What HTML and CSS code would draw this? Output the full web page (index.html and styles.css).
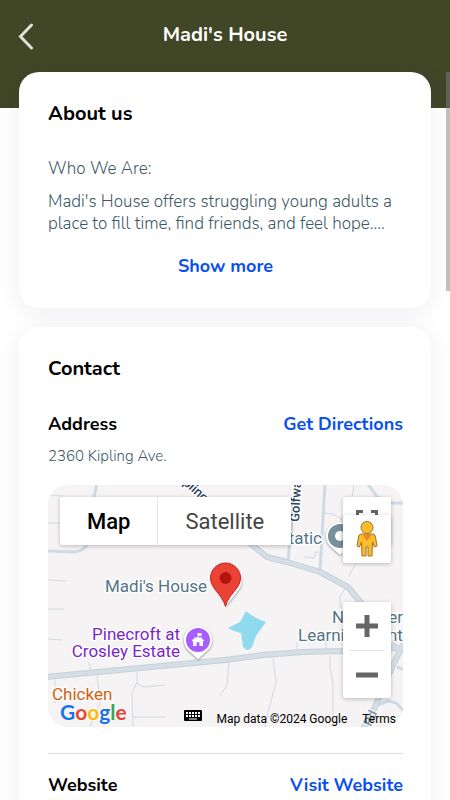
FILE: index.html
```html
<!DOCTYPE html>
<html lang="en">

<head>
    <meta charset="UTF-8">
    <meta name="viewport" content="width=device-width, initial-scale=1.0">
    <title>Madi's House</title>
    <link rel="stylesheet" href="styles.css">
</head>

<body>
    <header class="top-bar">
        <button class="back-btn" type="button" aria-label="Back">
            <svg width="16" height="28" viewBox="0 0 16 28">
                <path d="M13.500 3L2.500 14.500l11 11.500" />
            </svg>
        </button>
        <h1>Madi's House</h1>
    </header>

    <main>
        <section class="card">
            <h2>About us</h2>
            <div class="about-text">
                <p>Who We Are:</p>
                <p>Madi's House offers struggling young adults a place to fill time, find friends, and feel hope....</p>
            </div>
            <button class="show-more" type="button">Show more</button>
        </section>

        <section class="card contact">
            <h2>Contact</h2>
            <div class="row">
                <h3>Address</h3>
                <a href="#directions">Get Directions</a>
            </div>
            <p class="address">2360 Kipling Ave.</p>

            <div class="map">
                <svg class="map-canvas" viewBox="0 0 355 242" preserveAspectRatio="xMidYMid slice">
                    <!-- small streets -->
                    <g class="street">
                        <path d="M0 10L15 11M0 38H12M0 95L18 96M0 124H16M0 154L14 155" />
                        <path d="M40 177L42 180V186M7 193V218M49 189L52 218L42 242" />
                        <path d="M89 186V197L84 208L85 242M89 198L95 202L117 200M84 232H117" />
                        <path d="M181 177L179 200L172 211M225 173L228 198L220 227L217 242" />
                        <path d="M282 170V183L285 198V230M249 165V157M278 165V157" />
                        <path d="M277 28L285 29L295 35M271 67H268L266 73L256 72M306 0L304 12" />
                        <path d="M308 78L301 91M297 103L292 112V123" />
                    </g>
                    <g class="road-mid">
                        <path d="M49 -2L46 12L40 57Q37 66 27 67L0 66" />
                        <path d="M248 -2L244 35L240 77M277 -1L272 86M320 -1L329 12L343 18H356" />
                        <path d="M349 182L356 185M327 221L340 216L348 218L356 226" />
                    </g>
                    <g class="road-edge">
                        <path d="M-2 192L177 175L215 170L255 167L295 166L356 163" />
                        <path d="M190 50L204 60L219 72L239 77L272 87L300 102L314 119L322 135L349 164" />
                        <path d="M356 158L345 180L327 222L315 244" />
                    </g>
                    <g class="road">
                        <path d="M-2 192L177 175L215 170L255 167L295 166L356 163" />
                        <path d="M190 50L204 60L219 72L239 77L272 87L300 102L314 119L322 135L349 164" />
                        <path d="M356 158L345 180L327 222L315 244" />
                    </g>
                    <path class="lake" d="M198 126Q206 133 218 137L208 151L204 162Q200 168 195 162L193 148Q186 147 180 143L192 137Z" />

                    <g class="street-name">
                        <text transform="translate(126 -9) rotate(42)">Kipling</text>
                        <text transform="translate(251 37) rotate(-87)">Golfway</text>
                        <text class="faded" transform="translate(323 242) rotate(-65)">Rd</text>
                    </g>
                    <g class="place">
                        <text x="57" y="107">Madi's House</text>
                        <text x="274" y="59" text-anchor="end">tatic</text>
                        <text x="284" y="138">N</text>
                        <text x="355" y="138" text-anchor="end">er</text>
                        <text x="250" y="156">Learning Cent</text>
                    </g>
                    <g class="place purple" text-anchor="end">
                        <text x="132" y="155">Pinecroft at</text>
                        <text x="132" y="172">Crosley Estate</text>
                    </g>
                    <text class="place orange" x="4" y="215">Chicken</text>

                    <!-- grey pin -->
                    <path class="pin-back" d="M292 37a14 14 0 0 1 10 24L292 70L282 61a14 14 0 0 1 10-24Z" />
                    <circle cx="292" cy="51" r="12" fill="#78909c" />
                    <circle cx="292" cy="51" r="5" fill="#fff" />

                    <!-- purple pin -->
                    <path class="pin-back" d="M150 141a14 14 0 0 1 10 24L150 174L140 165a14 14 0 0 1 10-24Z" />
                    <circle cx="150" cy="155" r="12" fill="#a95cff" />
                    <path fill="#fff" fill-rule="evenodd" d="M149.500 148h4v3h-3v1.500h3.500v2h2v1.500h-1v5h-10v-5h-1v-1.500h2v-2h3.500ZM148.500 161h3v-3q-1.500-2-3 0Z" />

                    <!-- selected place -->
                    <path class="pin-back" d="M180 81a15 15 0 0 1 12 22L179 120L166 101Z" />
                    <path fill="#ea4335" stroke="#c5221f" d="M177.500 78C169 78 162.500 85 162.500 93C162.500 104 174 108 177.500 121.500C181 108 192.500 104 192.500 93C192.500 85 186 78 177.500 78Z" />
                    <circle cx="177.500" cy="93" r="6" fill="#b31412" />
                </svg>

                <div class="map-type">
                    <button class="active" type="button">Map</button>
                    <button type="button">Satellite</button>
                </div>

                <div class="map-tools">
                    <button class="fullscreen" type="button" aria-label="Toggle fullscreen">
                        <svg width="22" height="22" viewBox="0 0 22 22">
                            <path d="M1.500 7V1.500H7M15 1.500h5.500V7M20.500 15v5.500H15M7 20.500H1.500V15" />
                        </svg>
                    </button>
                    <button class="pegman" type="button" aria-label="Street View">
                        <svg width="22" height="38" viewBox="0 0 22 38">
                            <path d="M5 14h12q2 0 2.500 3l1.500 9-2.500 1-2-5-.500 14h-4v-9h-2v9h-4L5.500 22l-2 5L1 26l1.500-9q.500-3 2.500-3Z" />
                            <path class="scarf" d="M6 14h10l-5 7Z" />
                            <circle cx="11" cy="7.500" r="6" />
                        </svg>
                    </button>
                    <div class="zoom">
                        <button type="button" aria-label="Zoom in">
                            <svg width="22" height="22" viewBox="0 0 22 22">
                                <path d="M0 11h22M11 0v22" />
                            </svg>
                        </button>
                        <button type="button" aria-label="Zoom out">
                            <svg width="22" height="22" viewBox="0 0 22 22">
                                <path d="M0 11h22" />
                            </svg>
                        </button>
                    </div>
                </div>

                <a class="google" href="#google-maps"><span class="b">G</span><span class="r">o</span><span class="y">o</span><span class="b">g</span><span class="g">l</span><span class="r">e</span></a>

                <div class="map-footer">
                    <button type="button" aria-label="Keyboard shortcuts">
                        <svg width="18" height="12" viewBox="0 0 18 12">
                            <rect width="18" height="11" rx="1" />
                            <path d="M2 3h14M2 6h14" stroke="#fff" stroke-width="2" stroke-dasharray="2 1" />
                            <path d="M5 9h8" stroke="#fff" stroke-width="1" />
                        </svg>
                    </button>
                    <span>Map data ©2024 Google</span>
                    <a href="#terms">Terms</a>
                </div>
            </div>

            <div class="row website">
                <h3>Website</h3>
                <a href="#website">Visit Website</a>
            </div>
        </section>
    </main>

    <div class="scroll-thumb"></div>
</body>

</html>
```
FILE: styles.css
```css
* {
    box-sizing: border-box;
}

html {
    scrollbar-width: none;
}

body {
    margin: 0;
    background: #fff;
    color: #000;
    font-family: Nunito, Lato, sans-serif;
}

h1,
h2,
h3,
p {
    margin: 0;
}

button {
    border: 0;
    padding: 0;
    background: none;
    font-family: inherit;
    cursor: pointer;
}

a {
    text-decoration: none;
}

.top-bar {
    display: grid;
    grid-template-columns: 48px 1fr 48px;
    align-items: start;
    height: 108px;
    padding-top: 21px;
    background: #414627;
}

.top-bar h1 {
    color: #fff;
    font-size: 20px;
    line-height: 28px;
    text-align: center;
}

.back-btn {
    display: flex;
    padding: 1px 0 0 18px;
}

.back-btn path {
    fill: none;
    stroke: #dfe0da;
    stroke-width: 3;
    stroke-linecap: round;
}

main {
    display: flex;
    flex-direction: column;
    gap: 19px;
    margin-top: -36px;
    padding: 0 19px 20px;
}

.card {
    padding: 28px 28px 30px 29px;
    border-radius: 20px;
    background: #fff;
    box-shadow: 0 4px 24px rgba(40, 40, 90, 0.08);
}

.card h2 {
    font-size: 20px;
    line-height: 28px;
}

.about-text {
    display: flex;
    flex-direction: column;
    gap: 11px;
    margin-top: 30px;
    color: #3d5866;
    font-size: 17px;
    font-weight: 300;
    line-height: 22px;
}

.show-more {
    display: block;
    margin: 19px auto 0;
}

.show-more,
.row a {
    color: #0a50ee;
    font-size: 18px;
    font-weight: 700;
    line-height: 24px;
}

.row {
    display: flex;
    justify-content: space-between;
    align-items: center;
}

.contact .row {
    margin-top: 29px;
}

.row h3 {
    font-size: 18px;
    line-height: 24px;
}

.address {
    margin-top: 10px;
    color: #3d5866;
    font-size: 15px;
    font-weight: 300;
    line-height: 20px;
}

/* map */
.map {
    position: relative;
    height: 242px;
    margin-top: 19px;
    border-radius: 20px;
    overflow: hidden;
    background: #f5f3f4;
    font-family: Roboto, sans-serif;
}

.map-canvas {
    display: block;
    width: 100%;
    height: 100%;
}

.street,
.road-mid,
.road-edge,
.road {
    fill: none;
    stroke-linejoin: round;
}

.street {
    stroke: #cfdae2;
    stroke-width: 1;
}

.road-mid {
    stroke: #cfdae3;
    stroke-width: 3;
}

.road-edge {
    stroke: #c3d0d9;
    stroke-width: 6;
}

.road {
    stroke: #d5dee5;
    stroke-width: 4;
}

.lake {
    fill: #90daee;
}

.place,
.street-name {
    stroke: #fff;
    stroke-width: 3px;
    stroke-linejoin: round;
    paint-order: stroke;
}

.place {
    fill: #557486;
    font-size: 17px;
}

.purple {
    fill: #7c26c9;
}

.orange {
    fill: #cf5e10;
}

.street-name {
    fill: #2b4560;
    font-size: 13px;
    font-weight: 500;
}

.faded {
    opacity: 0.5;
}

.pin-back {
    fill: #fff;
    filter: drop-shadow(0 1px 1px rgba(0, 0, 0, 0.4));
}

.map-type,
.map-tools,
.map-footer,
.google {
    position: absolute;
}

.map-type {
    top: 12px;
    left: 12px;
    display: flex;
    height: 48px;
    border-radius: 2px;
    background: #fff;
    box-shadow: 0 1px 4px rgba(0, 0, 0, 0.25);
}

.map-type button {
    padding: 0 27px;
    color: #444;
    font-size: 22px;
}

.map-type .active {
    border-right: 1px solid #e6e6e6;
    color: #000;
    font-weight: 500;
}

.map-tools {
    top: 12px;
    right: 12px;
    width: 48px;
}

.map-tools button {
    display: flex;
    justify-content: center;
    align-items: center;
    width: 48px;
    height: 48px;
    background: #fff;
}

.map-tools .fullscreen,
.map-tools .pegman,
.zoom {
    border-radius: 2px;
    box-shadow: 0 1px 4px rgba(0, 0, 0, 0.25);
}

.fullscreen path,
.zoom path {
    fill: none;
    stroke: #666;
}

.fullscreen path {
    stroke-width: 3;
}

.zoom path {
    stroke-width: 5;
}

.map-tools .pegman {
    position: relative;
    margin-top: -30px;
}

.pegman svg {
    fill: #fbbc2c;
    stroke: #9b7426;
    stroke-width: 1;
}

.pegman .scarf {
    fill: #e58a25;
    stroke: none;
}

.zoom {
    margin-top: 39px;
    background: #fff;
}

.zoom button + button {
    border-top: 1px solid #e6e6e6;
    width: 36px;
    margin: 0 auto;
}

.google {
    left: 12px;
    bottom: 2px;
    font-family: Lato, sans-serif;
    font-size: 21px;
    font-weight: 700;
    line-height: 26px;
    text-shadow: 0 0 2px #fff, 0 0 2px #fff;
}

.google .b {
    color: #1a73e8;
}

.google .r {
    color: #ea4335;
}

.google .y {
    color: #fbbc05;
}

.google .g {
    color: #34a853;
}

.map-footer {
    right: 7px;
    bottom: 0;
    display: flex;
    align-items: center;
    gap: 15px;
    font-size: 12px;
    line-height: 14px;
}

.map-footer button {
    display: flex;
    padding-bottom: 5px;
}

.map-footer a {
    color: #000;
}

.contact .website {
    margin-top: 26px;
    padding-top: 19px;
    border-top: 1px solid #dcdcdc;
}

.scroll-thumb {
    position: fixed;
    top: 72px;
    right: 0;
    width: 4px;
    height: 219px;
    background: rgba(128, 128, 128, 0.5);
}
```
